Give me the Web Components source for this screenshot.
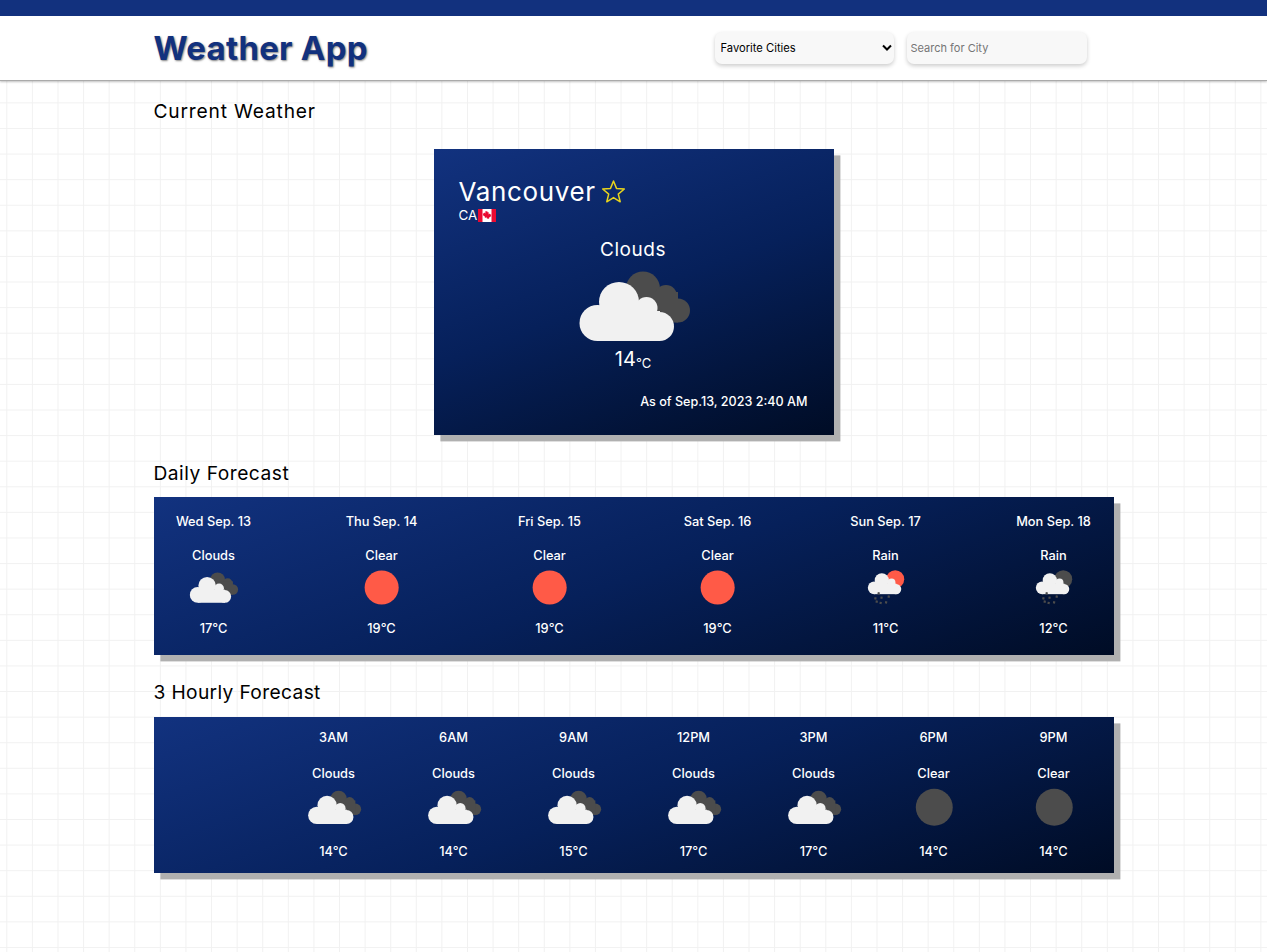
<!DOCTYPE html>
<html lang="en">
<head>
<meta charset="utf-8">
<title>Weather App</title>
<style>
  html, body { margin: 0; padding: 0; }
  body {
    min-height: 952px;
    color: #000;
    font-family: Inter, "Liberation Sans", sans-serif;
    background-color: #fff;
    background-image:
      linear-gradient(to right, #f1f1f1 1.3px, transparent 1.3px),
      linear-gradient(to bottom, #f1f1f1 1.3px, transparent 1.3px);
    background-size: 25.6px 25.6px;
    background-position: 6.3px 0;
  }
</style>
</head>
<body>
<weather-page></weather-page>

<script>
// shared cloud shapes, coordinates are for the 120x80 viewBox
const whiteCloud = `<g fill="#f1f1f1">
  <circle cx="23.5" cy="57" r="18"/><circle cx="45" cy="36" r="20"/>
  <circle cx="72.5" cy="42" r="11"/><circle cx="85.5" cy="60.5" r="14.5"/>
  <rect x="24" y="45" width="62" height="30"/></g>`;
const darkCloud = `<g fill="#4c4c4c">
  <circle cx="69" cy="22.5" r="17"/><circle cx="92" cy="30" r="11"/>
  <circle cx="104" cy="44.5" r="12"/><rect x="62" y="26" width="42" height="30.5"/></g>`;
const rainDrops = `<g stroke="#4c4c4c" stroke-width="5">
  <path d="M44.500 51l-1 5M37 62.500l-1 5M51 61l-1 5M67.500 58.500l-1 5M40 70l-1 5M49 73l-1 5M61.500 71.500l-1 5"/></g>`;
const smallCloud = `<g transform="translate(14.75 -5.46) scale(.81)">${whiteCloud}</g>`;

const iconShapes = {
  clouds: darkCloud + whiteCloud,
  sun: '<circle cx="60" cy="40" r="39" fill="#ff5a47"/>',
  moon: '<circle cx="60" cy="40" r="38.5" fill="#4c4c4c"/>',
  'rain-day': '<circle cx="82" cy="21" r="20.5" fill="#ff5a47"/>' + smallCloud + rainDrops,
  'rain-night': '<circle cx="82" cy="21" r="20.5" fill="#4c4c4c"/>' + smallCloud + rainDrops,
};

customElements.define('weather-icon', class WeatherIcon extends HTMLElement {
  connectedCallback() {
    const shadow = this.attachShadow({mode: 'open'});
    const scale = parseFloat(this.getAttribute('scale') || '1');
    shadow.innerHTML = `<style>
      :host { display: block; width: ${120 * scale}px; height: ${80 * scale}px; }
      svg { display: block; width: 100%; height: 100%; }
    </style>
    <svg viewBox="-1 0 120 80" aria-hidden="true">${iconShapes[this.getAttribute('type')]}</svg>`;
  }
});

customElements.define('app-header', class AppHeader extends HTMLElement {
  constructor() {
    super();
    this.attachShadow({mode: 'open'}).innerHTML = `<style>
      :host {
        display: block;
        background: #fff;
        border-top: 16px solid #12317e;
        border-bottom: 1px solid #aaa;
        box-shadow: 0 1px 2px rgba(0, 0, 0, .25);
      }
      .inner {
        width: 960px;
        height: 64px;
        margin: 0 auto;
        display: flex;
        align-items: center;
        justify-content: space-between;
      }
      h1 {
        margin: 0;
        color: #12317e;
        font: 700 33px Inter, "Liberation Sans", sans-serif;
        letter-spacing: .25px;
        text-shadow: 1px 1px 2px rgba(0, 0, 0, .5);
      }
      .controls { display: flex; gap: 13px; margin-right: 27px; }
      .pick { position: relative; width: 179px; height: 32px; }
      select, input {
        box-sizing: border-box;
        width: 100%;
        height: 32px;
        border: 0;
        outline: 0;
        border-radius: 7px;
        background: #f8f8f8;
        box-shadow: 0 2px 4px rgba(0, 0, 0, .2);
        color: #000;
        font: 400 11.2px Inter, "Liberation Sans", sans-serif;
      }
      select { appearance: none; padding: 0 0 0 6px; }
      .pick svg { position: absolute; right: 2px; top: 12px; pointer-events: none; }
      .search { width: 180px; }
      input { padding: 0 4px; font-size: 11px; }
      input::placeholder { color: #757575; opacity: 1; }
    </style>
    <div class="inner">
      <h1>Weather App</h1>
      <div class="controls">
        <div class="pick">
          <select><option>Favorite Cities</option></select>
          <svg width="10" height="8" viewBox="0 0 10 8"><path d="M1 1.500l4 4 4-4" fill="none" stroke="#000" stroke-width="2"/></svg>
        </div>
        <div class="search"><input type="text" placeholder="Search for City"></div>
      </div>
    </div>`;
  }
});

customElements.define('section-block', class SectionBlock extends HTMLElement {
  constructor() {
    super();
    this.attachShadow({mode: 'open'}).innerHTML = `<style>
      :host { display: block; width: 960px; margin: 0 auto; }
      h2 {
        margin: 0;
        height: 24px;
        font: 400 19.2px/24px Inter, "Liberation Sans", sans-serif;
        letter-spacing: var(--track, .35px);
        color: #000;
      }
      .body { margin-top: var(--gap, 12px); }
    </style>
    <h2><slot name="title"></slot></h2>
    <div class="body"><slot></slot></div>`;
  }
});

customElements.define('current-card', class CurrentCard extends HTMLElement {
  constructor() {
    super();
    this.attachShadow({mode: 'open'}).innerHTML = `<style>
      :host {
        display: block;
        box-sizing: border-box;
        width: 400px;
        height: 286px;
        margin: 0 auto;
        padding: 25px 26px 0 25px;
        color: #fff;
        background: linear-gradient(160deg, #12327f, #06205a 50%, #000c25);
        box-shadow: 6.4px 6.4px 0 #b0b0b0;
        font-family: Inter, "Liberation Sans", sans-serif;
      }
      .city { display: flex; align-items: center; gap: 5px; height: 34px; font-size: 26px; letter-spacing: .65px; }
      .city svg { display: block; }
      .country { display: flex; align-items: center; gap: 1px; height: 16px; margin-top: -1px; font-size: 13.4px; }
      .flag { display: block; }
      .mid { display: flex; flex-direction: column; align-items: center; }
      .cond { height: 24px; margin-top: 15px; font-size: 19px; line-height: 24px; letter-spacing: .55px; }
      weather-icon { margin-top: 4px; }
      .temp { height: 24px; margin-top: 1px; font-size: 20px; line-height: 24px; }
      .temp small { font-size: 13px; position: relative; top: 2px; }
      .stamp { margin-top: 23px; height: 16px; text-align: right; font-size: 12.6px; font-weight: 500; line-height: 16px; }
    </style>
    <div class="city"><span>Vancouver</span>
      <svg width="25" height="25" viewBox="0 0 25 25"><path d="M12.500 2l3 7.400 7.800.6-6 5.100 1.900 7.700-6.700-4.200-6.700 4.200 1.900-7.700-6-5.100 7.800-.6z" fill="none" stroke="#e9d41c" stroke-width="1.500" stroke-linejoin="round"/></svg>
    </div>
    <div class="country"><span>CA</span>
      <svg class="flag" width="18" height="13" viewBox="0 0 18 13">
        <rect width="18" height="13" fill="#fff"/>
        <rect width="4.500" height="13" fill="#ea0a32"/><rect x="13.500" width="4.500" height="13" fill="#ea0a32"/>
        <path d="M9 2l.9 1.600.9-.4-.3 2.200 1.100-.9.500.9 1.100-.2-.4 1.300.5.400-2.300 1.900.2.900-2.100-.3V10h-.2V8.400l-2.100.3.200-.9-2.300-1.900.500-.4-.4-1.300 1.100.2.500-.9 1.100.9-.3-2.200.9.400z" fill="#ea0a32"/>
      </svg>
    </div>
    <div class="mid">
      <div class="cond">Clouds</div>
      <weather-icon type="clouds"></weather-icon>
      <div class="temp">14<small>°C</small></div>
    </div>
    <div class="stamp">As of Sep.13, 2023 2:40 AM</div>`;
  }
});

customElements.define('forecast-item', class ForecastItem extends HTMLElement {
  connectedCallback() {
    const shadow = this.attachShadow({mode: 'open'});
    shadow.innerHTML = `<style>
      :host {
        display: flex;
        flex-direction: column;
        align-items: center;
        width: 120px;
        color: #fff;
        font: 500 12.8px/16px Inter, "Liberation Sans", sans-serif;
      }
      div { height: 16px; white-space: nowrap; }
      .cond { margin-top: var(--to-cond); }
      weather-icon { margin-top: var(--to-icon); }
      .temp { margin-top: var(--to-temp); }
    </style>
    <div>${this.getAttribute('label')}</div>
    <div class="cond">${this.getAttribute('cond')}</div>
    <weather-icon type="${this.getAttribute('icon')}" scale="${this.getAttribute('scale')}"></weather-icon>
    <div class="temp">${this.getAttribute('temp')}</div>`;
  }
});

customElements.define('forecast-strip', class ForecastStrip extends HTMLElement {
  constructor() {
    super();
    this.attachShadow({mode: 'open'}).innerHTML = `<style>
      :host {
        display: flex;
        justify-content: space-between;
        box-sizing: border-box;
        width: 960px;
        background: linear-gradient(160deg, #12327f, #06205a 50%, #000c25);
        box-shadow: 6.4px 6.4px 0 #b0b0b0;
      }
    </style><slot></slot>`;
  }
});

const daily = [
  ['Wed Sep. 13', 'Clouds', 'clouds', '17°C'],
  ['Thu Sep. 14', 'Clear', 'sun', '19°C'],
  ['Fri Sep. 15', 'Clear', 'sun', '19°C'],
  ['Sat Sep. 16', 'Clear', 'sun', '19°C'],
  ['Sun Sep. 17', 'Rain', 'rain-day', '11°C'],
  ['Mon Sep. 18', 'Rain', 'rain-night', '12°C'],
];
const hourly = [
  ['3AM', 'Clouds', 'clouds', '14°C'],
  ['6AM', 'Clouds', 'clouds', '14°C'],
  ['9AM', 'Clouds', 'clouds', '15°C'],
  ['12PM', 'Clouds', 'clouds', '17°C'],
  ['3PM', 'Clouds', 'clouds', '17°C'],
  ['6PM', 'Clear', 'moon', '14°C'],
  ['9PM', 'Clear', 'moon', '14°C'],
];

function itemMarkup(rows, scale) {
  return rows.map(([label, cond, icon, temp]) =>
    `<forecast-item label="${label}" cond="${cond}" icon="${icon}" temp="${temp}" scale="${scale}"></forecast-item>`).join('');
}

customElements.define('weather-page', class WeatherPage extends HTMLElement {
  constructor() {
    super();
    this.attachShadow({mode: 'open'}).innerHTML = `<style>
      :host { display: block; }
      .current { margin-top: 18px; --gap: 26px; --track: .82px; }
      .daily { margin-top: 26px; --gap: 12px; --track: .5px; }
      .hourly { margin-top: 25px; --gap: 13px; --track: .35px; }
      .daily forecast-strip {
        padding: 17px 0 18px;
        --to-cond: 18px; --to-icon: 6px; --to-temp: 16px;
      }
      .hourly forecast-strip {
        padding: 13px 0 13px;
        --to-cond: 20px; --to-icon: 6.4px; --to-temp: 17.2px;
      }
      .spacer { width: 120px; }
    </style>
    <app-header></app-header>
    <section-block class="current"><span slot="title">Current Weather</span>
      <current-card></current-card>
    </section-block>
    <section-block class="daily"><span slot="title">Daily Forecast</span>
      <forecast-strip>${itemMarkup(daily, .437)}</forecast-strip>
    </section-block>
    <section-block class="hourly"><span slot="title">3 Hourly Forecast</span>
      <forecast-strip><div class="spacer"></div>${itemMarkup(hourly, .48)}</forecast-strip>
    </section-block>`;
  }
});
</script>
</body>
</html>
